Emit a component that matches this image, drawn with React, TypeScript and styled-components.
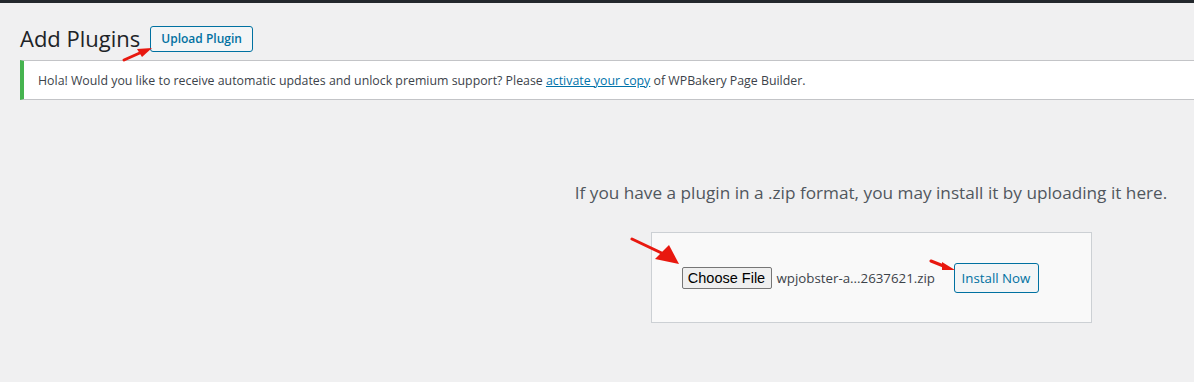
import styled, { createGlobalStyle } from 'styled-components';

const GlobalStyle = createGlobalStyle`
  html, body {
    margin: 0;
    padding: 0;
    background: #f0f0f1;
    font-family: 'Open Sans', 'Noto Sans', sans-serif;
    color: #3c434a;
  }
`;

// red annotation arrows drawn over the screen
const arrows = [
  { left: 120, top: 44, width: 36, height: 20, shaft: 'M4 16 L22 8', head: '32,4 17,5 22,13' },
  { left: 628, top: 234, width: 54, height: 34, shaft: 'M4 5 L40 22', head: '51,30 27,25 41,11' },
  { left: 928, top: 257, width: 30, height: 17, shaft: 'M3 4 L18 10', head: '27,13 14,5 14,13' },
];

const App = () => {
  return (
    <Page>
      <GlobalStyle />
      <TopBar />
      <Wrap>
        <HeaderRow>
          <Title>Add Plugins</Title>
          <UploadButton>Upload Plugin</UploadButton>
        </HeaderRow>
        <Notice>
          Hola! Would you like to receive automatic updates and unlock premium
          support? Please <NoticeLink href="#">activate your copy</NoticeLink> of
          WPBakery Page Builder.
        </Notice>
        <UploadSection>
          <Description>
            If you have a plugin in a .zip format, you may install it by
            uploading it here.
          </Description>
          <UploadForm>
            <FileField>
              <ChooseButton>Choose File</ChooseButton>
              <FileName>wpjobster-a...2637621.zip</FileName>
            </FileField>
            <InstallButton>Install Now</InstallButton>
          </UploadForm>
        </UploadSection>
      </Wrap>
      {arrows.map((a, i) => (
        <Arrow
          key={i}
          style={{ left: a.left, top: a.top }}
          width={a.width}
          height={a.height}
          viewBox={`0 0 ${a.width} ${a.height}`}
        >
          <path d={a.shaft} stroke="#e8180f" strokeWidth="3" strokeLinecap="round" fill="none" />
          <polygon points={a.head} fill="#e8180f" />
        </Arrow>
      ))}
    </Page>
  );
};

export default App;

const Page = styled.div`
  position: relative;
  width: 1194px;
  height: 382px;
  overflow: hidden;
`;

const TopBar = styled.div`
  height: 3px;
  background: #23282d;
`;

const Wrap = styled.div`
  padding-left: 20px;
`;

const HeaderRow = styled.div`
  display: flex;
  align-items: center;
  height: 43px;
  margin-top: 14px;
`;

const Title = styled.h1`
  margin: 0;
  font-size: 22px;
  font-weight: 400;
  line-height: 1.3;
  color: #1d2327;
`;

const UploadButton = styled.button`
  margin-left: 10px;
  height: 26px;
  padding: 0 10px;
  font-family: inherit;
  font-size: 12px;
  font-weight: 600;
  color: #0071a1;
  background: #f3f5f6;
  border: 1px solid #0071a1;
  border-radius: 3px;
`;

const Notice = styled.div`
  box-sizing: border-box;
  height: 40px;
  display: flex;
  align-items: center;
  padding-left: 14px;
  background: #fff;
  border-top: 1px solid #c3c4c7;
  border-bottom: 1px solid #c3c4c7;
  border-left: 4px solid #46b450;
  font-size: 12.35px;
  color: #3c434a;
  white-space: pre;
`;

const NoticeLink = styled.a`
  color: #0073aa;
  text-decoration: underline;
`;

const UploadSection = styled.div`
  margin-left: 528px;
  margin-top: 79px;
  display: flex;
  flex-direction: column;
  align-items: center;
`;

const Description = styled.p`
  margin: 0;
  font-size: 17.2px;
  line-height: 28px;
  color: #50575e;
`;

const UploadForm = styled.div`
  box-sizing: border-box;
  width: 441px;
  height: 91px;
  margin-top: 25px;
  padding-left: 30px;
  display: flex;
  align-items: center;
  background: #f9f9f9;
  border: 1px solid #ccd0d4;
`;

const FileField = styled.div`
  display: flex;
  align-items: center;
  width: 272px;
  padding-top: 1px;
`;

const ChooseButton = styled.button`
  box-sizing: border-box;
  width: 90px;
  height: 22px;
  padding: 0;
  font-family: 'Liberation Sans', Arial, sans-serif;
  font-size: 14.5px;
  color: #000;
  background: #efefef;
  border: 1px solid #767676;
  border-radius: 2px;
`;

const FileName = styled.span`
  margin-left: 5px;
  font-size: 13.3px;
  color: #3c434a;
`;

const InstallButton = styled.button`
  box-sizing: border-box;
  width: 85px;
  height: 30px;
  padding: 0;
  font-family: inherit;
  font-size: 13.3px;
  color: #0071a1;
  background: #f3f5f6;
  border: 1px solid #0071a1;
  border-radius: 3px;
`;

const Arrow = styled.svg`
  position: absolute;
  overflow: visible;
`;
